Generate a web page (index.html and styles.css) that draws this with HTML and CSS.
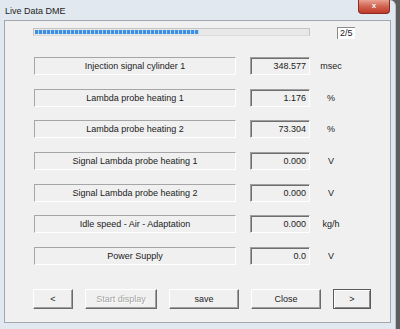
FILE: index.html
```html
<!DOCTYPE html>
<html lang="en">
<head>
    <meta charset="UTF-8">
    <meta name="viewport" content="width=device-width, initial-scale=1.0">
    <title>Live Data DME</title>
    <link rel="stylesheet" href="styles.css">
</head>
<body>
    <div class="window">
        <div class="titlebar">
            <span class="title">Live Data DME</span>
            <span class="close-btn">x</span>
        </div>
        <div class="client">
            <div class="progress-row">
                <div class="progress">
                    <div class="progress-fill" style="width: 60%"></div>
                </div>
                <div class="counter">2/5</div>
            </div>
            <div class="rows">
                <div class="row">
                    <div class="label">Injection signal cylinder 1</div>
                    <div class="value">348.577</div>
                    <div class="unit">msec</div>
                </div>
                <div class="row">
                    <div class="label">Lambda probe heating 1</div>
                    <div class="value">1.176</div>
                    <div class="unit">%</div>
                </div>
                <div class="row">
                    <div class="label">Lambda probe heating 2</div>
                    <div class="value">73.304</div>
                    <div class="unit">%</div>
                </div>
                <div class="row">
                    <div class="label">Signal Lambda probe heating 1</div>
                    <div class="value">0.000</div>
                    <div class="unit">V</div>
                </div>
                <div class="row">
                    <div class="label">Signal Lambda probe heating 2</div>
                    <div class="value">0.000</div>
                    <div class="unit">V</div>
                </div>
                <div class="row">
                    <div class="label">Idle speed - Air - Adaptation</div>
                    <div class="value">0.000</div>
                    <div class="unit">kg/h</div>
                </div>
                <div class="row">
                    <div class="label">Power Supply</div>
                    <div class="value">0.0</div>
                    <div class="unit">V</div>
                </div>
            </div>
            <div class="buttons">
                <button class="btn btn-nav">&lt;</button>
                <button class="btn btn-wide" disabled>Start display</button>
                <button class="btn btn-mid">save</button>
                <button class="btn btn-mid">Close</button>
                <button class="btn btn-nav default">&gt;</button>
            </div>
        </div>
    </div>
</body>
</html>
```

FILE: styles.css
```css
body {
    margin: 0;
    background-color: #5e5e5e;
    font-family: "Liberation Sans", Arial, sans-serif;
    font-size: 9px;
    color: #222;
    overflow: hidden;
}
.window {
    width: 396px;
    height: 329px;
    box-sizing: border-box;
    padding: 0 4px;
    background-color: #e2e8ef;
    border-top-right-radius: 6px;
    border-right: 1px solid #b9c0c8;
}
.titlebar {
    height: 20px;
    display: flex;
    justify-content: space-between;
    align-items: flex-start;
}
.title {
    padding: 2px 0 0 1px;
    line-height: 18px;
    font-size: 9px;
    color: #1e1e1e;
}
.close-btn {
    width: 32px;
    height: 14px;
    margin-right: 1px;
    box-sizing: border-box;
    border: 1px solid #8a2a20;
    border-top: none;
    border-radius: 0 0 4px 4px;
    background: linear-gradient(#e9a293, #d0634f 50%, #c0392b);
    color: #f4f4f4;
    font-weight: bold;
    font-size: 8px;
    line-height: 12px;
    text-align: center;
}
.client {
    height: 303px;
    box-sizing: border-box;
    border: 1px solid #a2a8ae;
    background-color: #f0f0f0;
    padding-left: 28px;
}
.progress-row {
    display: flex;
    align-items: flex-start;
    margin-top: 6px;
}
.progress {
    width: 277px;
    height: 8px;
    margin-top: 1px;
    box-sizing: border-box;
    border: 1px solid #c4c4c4;
    border-bottom-color: #dcdcdc;
    background-color: #e8e8e8;
    padding: 1px;
}
.progress-fill {
    height: 100%;
    background: repeating-linear-gradient(90deg, #3d8fe2 0 3px, #b9d4ef 3px 4px);
}
.counter {
    width: 18px;
    height: 12px;
    margin-left: 27px;
    box-sizing: border-box;
    background-color: #fff;
    border-top: 1px solid #8a8a8a;
    border-left: 1px solid #8a8a8a;
    font-size: 9px;
    line-height: 11px;
    padding-left: 2px;
}
.rows {
    display: flex;
    flex-direction: column;
    gap: 13.67px;
    margin-top: 18px;
    padding-left: 1px;
}
.row {
    display: flex;
    height: 18px;
}
.label {
    width: 202px;
    box-sizing: border-box;
    border-top: 1px solid #a6a6a6;
    border-left: 1px solid #a6a6a6;
    border-bottom: 1px solid #fff;
    border-right: 1px solid #fff;
    text-align: center;
    line-height: 16px;
}
.value {
    width: 60px;
    margin-left: 14px;
    box-sizing: border-box;
    border-top: 1px solid #a0a0a0;
    border-left: 1px solid #a0a0a0;
    border-bottom: 1px solid #fff;
    border-right: 1px solid #fff;
    box-shadow: inset 1px 1px 0 #6e6e6e;
    text-align: right;
    padding-right: 3px;
    line-height: 17px;
}
.unit {
    width: 22px;
    margin-left: 10px;
    text-align: center;
    line-height: 18px;
}
.buttons {
    display: flex;
    gap: 12px;
    margin-top: 24px;
}
.btn {
    height: 20px;
    padding: 0;
    box-sizing: border-box;
    border: 1px solid;
    border-color: #fff #6a6a6a #6a6a6a #fff;
    box-shadow: inset -1px -1px 0 #a0a0a0;
    background-color: #f0f0f0;
    font-family: "Liberation Sans", Arial, sans-serif;
    font-size: 9px;
    color: #222;
}
.btn-nav {
    width: 40px;
}
.btn-wide {
    width: 72px;
}
.btn-mid {
    width: 70px;
}
.btn:disabled {
    color: #a3a3a3;
    text-shadow: 1px 1px 0 #fff;
}
.default {
    width: 38px;
    border: 1px solid #5a5a5a;
    box-shadow: inset 1px 1px 0 #fff, inset -1px -1px 0 #8a8a8a;
}
```
